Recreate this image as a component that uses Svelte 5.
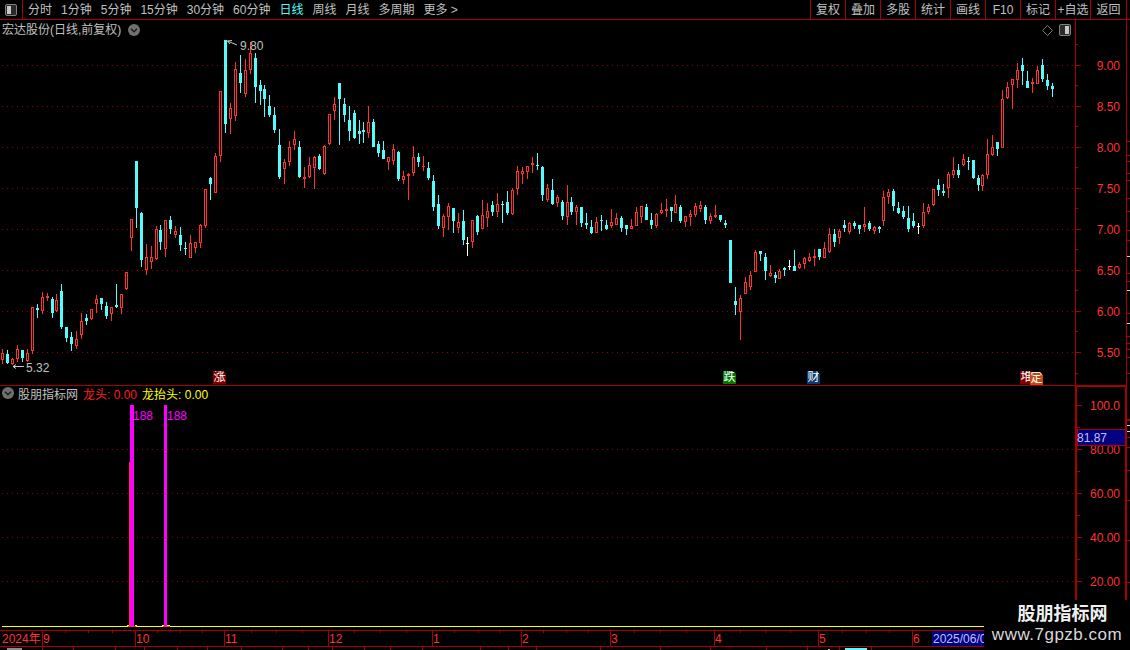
<script>
  const left = ['分时', '1分钟', '5分钟', '15分钟', '30分钟', '60分钟', '日线', '周线', '月线', '多周期', '更多 >'];
  const right = ['复权', '叠加', '多股', '统计', '画线', 'F10', '标记', '+自选', '返回'];

  const raw = [
    [0,349,353,360,364],[1,350,354,363,364],[0,358,359,364,365],[0,345,349,359,362],[1,350,350,358,362],[0,349,353,361,362],
    [0,307,307,351,354],[1,304,308,310,318],[0,292,297,311,314],[0,293,296,298,301],[1,297,299,313,318],[0,294,300,311,312],
    [1,284,291,327,329],[1,327,327,338,342],[1,332,337,344,351],[0,331,339,346,349],[0,313,321,335,339],[1,314,318,321,325],
    [0,309,309,319,320],[0,295,299,304,313],[1,298,298,304,310],[1,302,306,316,319],[0,307,307,314,321],[1,284,305,307,308],
    [0,294,294,308,314],[0,272,272,289,290],[0,219,219,238,251],[1,161,161,208,228],[1,212,213,260,267],[0,244,257,270,275],
    [0,246,257,262,269],[0,226,229,259,260],[1,225,230,242,250],[0,220,220,249,257],[1,216,220,229,234],[0,226,231,235,238],
    [1,227,235,245,251],[1,242,248,249,255],[0,235,243,258,258],[0,242,242,248,253],[0,224,225,243,248],[0,189,189,226,228],
    [1,177,178,184,200],[0,153,156,193,193],[0,91,91,156,162],[1,40,40,124,133],[0,103,108,119,134],[0,62,69,116,121],
    [1,55,73,83,93],[0,59,70,94,97],[0,42,53,70,74],[1,53,58,87,103],[1,80,85,91,105],[1,85,89,99,117],[1,95,106,115,117],
    [1,107,115,130,133],[1,129,145,177,179],[0,159,162,169,184],[0,141,147,162,166],[0,131,139,145,150],[1,141,147,177,178],
    [0,167,177,179,188],[0,157,165,177,178],[0,156,157,168,189],[1,154,156,169,170],[0,145,146,174,175],[0,114,114,144,145],
    [0,97,104,111,120],[1,83,83,99,145],[1,98,104,115,122],[1,106,120,131,141],[1,110,113,138,139],[1,120,131,134,144],
    [1,122,130,132,143],[0,106,122,133,138],[1,119,122,147,147],[1,141,144,153,157],[1,141,150,159,159],[0,157,157,162,170],
    [0,144,149,161,165],[1,151,152,179,181],[0,171,176,180,184],[0,173,174,176,200],[0,146,157,173,176],[1,153,157,162,167],
    [0,156,166,167,171],[1,162,168,178,180],[1,175,181,207,211],[1,195,204,226,229],[0,214,216,228,237],[0,203,206,217,230],
    [1,208,208,221,233],[0,213,222,228,233],[1,210,221,240,245],[2,237,243,244,256],[0,220,220,242,248],[1,215,216,232,235],
    [0,200,215,229,229],[0,203,211,218,227],[1,201,205,212,216],[0,193,204,212,217],[1,201,204,205,223],[1,191,202,213,215],
    [0,188,190,214,215],[0,166,171,189,195],[0,167,171,174,184],[0,166,166,172,179],[0,157,163,165,173],[1,153,165,166,170],
    [1,166,167,195,201],[0,184,188,200,202],[1,179,190,204,205],[0,195,197,203,207],[1,200,202,216,220],[0,185,202,217,225],
    [1,197,202,212,215],[0,205,207,212,225],[1,207,207,223,227],[1,213,223,225,229],[1,220,227,233,234],[0,217,222,233,233],
    [1,215,220,221,231],[1,220,225,229,230],[0,209,222,226,228],[0,213,218,225,225],[1,216,218,228,232],[1,225,225,229,235],
    [0,219,226,229,229],[0,207,212,226,226],[0,206,206,217,223],[1,204,207,220,220],[1,213,220,225,229],[0,213,214,226,228],
    [0,203,210,213,214],[0,199,209,211,217],[1,207,207,211,222],[0,195,204,213,213],[1,205,207,221,223],[0,216,216,222,227],
    [0,210,214,217,226],[0,203,206,215,217],[0,201,205,209,212],[1,205,207,220,224],[0,213,216,221,224],[0,205,215,217,218],
    [1,215,215,220,222],[1,220,223,225,228],[1,240,240,283,283],[1,287,301,305,315],[0,295,298,312,340],[0,277,282,294,294],
    [0,271,275,287,290],[0,250,252,272,272],[1,251,251,254,261],[1,253,257,271,280],[0,265,273,276,277],[1,272,275,278,283],
    [0,269,271,279,279],[1,267,268,270,276],[2,260,266,267,270],[1,250,266,271,271],[0,262,264,268,269],[0,257,258,264,269],
    [0,253,257,261,262],[0,249,256,258,266],[1,249,249,257,260],[0,242,248,258,258],[0,228,234,252,253],[1,229,234,242,247],
    [0,229,231,238,244],[1,220,225,228,232],[0,222,223,232,234],[1,221,223,226,229],[1,225,225,229,234],[0,207,224,227,232],
    [1,221,223,229,231],[0,226,227,231,234],[1,226,227,229,233],[0,191,197,221,226],[0,189,192,197,204],[1,189,191,206,211],
    [1,202,208,213,214],[1,206,211,217,219],[1,206,218,229,232],[1,213,221,226,228],[2,223,226,227,234],[0,203,212,226,228],
    [0,204,207,212,214],[0,189,189,205,206],[1,179,185,190,196],[1,184,191,193,196],[0,172,174,188,198],[0,157,170,175,178],
    [1,164,170,175,178],[0,154,159,165,166],[1,157,161,162,170],[1,160,160,178,179],[1,175,178,185,191],[0,174,175,186,191],
    [0,139,154,175,179],[0,135,147,155,156],[1,142,142,149,156],[0,90,99,148,148],[0,82,87,98,99],[0,79,79,85,109],
    [0,63,70,80,88],[1,58,65,71,85],[1,71,81,88,88],[0,78,82,84,93],[0,66,70,84,84],[1,59,65,79,82],[1,74,80,86,90],[1,83,86,89,97]
  ];
  const candles = raw.map((c, i) => ({ t: c[0], x: 2 + Math.round(i * 4.952), wt: c[1], bt: c[2], bb: c[3], wb: c[4] }));
  const colors = ['#ff3232', '#54fcfc', '#ffffff'];

  const priceGrid = [[65, '9.00'], [106, '8.50'], [147, '8.00'], [188, '7.50'], [229, '7.00'], [270, '6.50'], [311, '6.00'], [352, '5.50']];
  const volGrid = [[449, '80.00'], [493, '60.00'], [537, '40.00'], [581, '20.00']];
  const farTicks = [[141, 1, 0], [155, 0, 0], [161, 0, 0], [173, 0, 0], [180, 0, 0], [198, 0, 0], [211, 0, 0], [230, 0, 0], [240, 0, 0], [256, 0, 1], [273, 0, 0], [281, 0, 0], [290, 0, 1], [313, 0, 0], [323, 0, 1], [336, 1, 0], [343, 0, 0], [349, 0, 0], [357, 0, 0], [373, 0, 0]];
  const lowerFar = [[420, 1, 0], [419, 0, 0], [425, 0, 1], [431, 0, 1], [437, 1, 0], [447, 0, 0], [470, 0, 0], [500, 0, 0], [540, 0, 0], [582, 0, 0]];

  const months = [[42, '9'], [135, '10'], [224, '11'], [328, '12'], [432, '1'], [521, '2'], [610, '3'], [714, '4'], [818, '5'], [912, '6']];
  const minor = [65, 88, 112, 157, 180, 202, 251, 276, 302, 354, 380, 406, 454, 478, 499, 543, 566, 588, 634, 660, 686, 740, 765, 790, 842, 866, 889];
  const lowSeps = [42, 73, 115, 144, 177, 207, 241, 282, 308, 332, 364, 390, 422, 480, 508, 536, 600, 660, 710, 766, 807, 839, 871];
  const badges = [
    { t: '涨', c: 'b-red', x: 213 }, { t: '跌', c: 'b-green', x: 723 }, { t: '财', c: 'b-blue', x: 807 },
    { t: '堆', c: 'b-red', x: 1020 }, { t: '定', c: 'b-orange', x: 1030 }
  ];
</script>

<div class="app">
  <header class="topbar">
    <div class="corner"><span class="toggle on-left"></span></div>
    <nav class="periods">
      {#each left as item}
        <span class:active={item === '日线'}>{item}</span>
      {/each}
    </nav>
    <nav class="tools">
      {#each right as item}
        <span>{item}</span>
      {/each}
    </nav>
  </header>

  <section class="panel upper">
    <svg width="1130" height="366" viewBox="0 20 1130 366" class="chart">
      {#each priceGrid as g}
        <line class="grid" x1="2" x2="1075" y1={g[0] + 0.5} y2={g[0] + 0.5} />
        <rect class="axis" x="1075" y={g[0]} width="6" height="1" />
        <rect class="axis" x="1075" y={g[0] - 21} width="3" height="1" />
        <text class="axis-label" x="1120" y={g[0] + 5} text-anchor="end">{g[1]}</text>
      {/each}
      <rect class="axis" x="1075" y="373" width="3" height="1" />
      <rect class="axis" x="1075" y="20" width="1" height="365" />
      <rect class="axis" x="1126" y="20" width="1" height="365" />
      <rect class="axis" x="0" y="385" width="1127" height="1" />
      {#each farTicks as t}
        <rect fill={t[2] ? '#d0d0d0' : '#a80000'} x={t[1] ? 1126 : 1127} y={t[0]} width={t[1] ? 4 : 3} height="1" />
      {/each}

      {#each candles as c}
        <rect fill={colors[c.t]} x={c.x} y={c.wt} width="1" height={c.wb - c.wt} />
        {#if c.t === 0 && c.bb - c.bt > 2}
          <rect class="hollow" x={c.x - 0.5} y={c.bt + 0.5} width="2" height={c.bb - c.bt - 1} />
        {:else}
          <rect fill={colors[c.t]} x={c.x - 1} y={c.bt} width="3" height={Math.max(c.bb - c.bt, 1)} />
        {/if}
      {/each}

      <path class="flag" d="M237 45 L227.5 41 M227.5 41 L232 40.5 M227.5 41 L230 44" />
      <text class="note" x="240" y="50">9.80</text>
      <path class="flag" d="M24 366.5 H13 M13 366.5 L16 364.5 M13 366.5 L16 368.5" />
      <text class="note" x="26" y="372">5.32</text>
    </svg>

    <div class="title">
      <span>宏达股份(日线,前复权)</span>
      <svg class="chev" width="12" height="12" viewBox="0 0 12 12"><circle cx="6" cy="6" r="6" fill="#707070" /><path d="M3 4.8 L6 7.8 L9 4.8" fill="none" stroke="#1c1c1c" stroke-width="1.4" /></svg>
    </div>
    <div class="window-tools">
      <svg width="11" height="11" viewBox="0 0 11 11"><path d="M5.5 .5 L10.5 5.5 L5.5 10.5 L.5 5.5 Z" fill="none" stroke="#7a7a7a" /></svg>
      <span class="toggle on-right"></span>
    </div>
    {#each badges as b}
      <span class="badge {b.c}" style="left:{b.x}px">{b.t}</span>
    {/each}
  </section>

  <section class="panel lower">
    <svg width="1130" height="244" viewBox="0 386 1130 244" class="chart">
      {#each volGrid as g}
        <line class="grid" x1="2" x2="1075" y1={g[0] + 0.5} y2={g[0] + 0.5} />
        <rect class="axis" x="1077" y={g[0]} width="5" height="1" />
        <rect class="axis" x="1077" y={g[0] - 22} width="3" height="1" />
        <text class="axis-label" x="1120" y={g[0] + 5} text-anchor="end">{g[1]}</text>
      {/each}
      <rect class="axis" x="1077" y="405" width="5" height="1" />
      <text class="axis-label" x="1120" y="410" text-anchor="end">100.0</text>
      <rect class="axis" x="1077" y="603" width="3" height="1" />
      <rect class="axis" x="1075" y="386" width="2" height="214" />
      <rect class="axis" x="1125" y="386" width="2" height="214" />
      <rect class="axis" x="1075" y="386" width="52" height="1" />
      {#each lowerFar as t}
        <rect fill={t[2] ? '#d0d0d0' : '#a80000'} x={t[1] ? 1126 : 1127} y={t[0]} width={t[1] ? 4 : 3} height="1" />
      {/each}

      <rect class="last-box" x="1077.5" y="429.5" width="48" height="16" />
      <text class="last-text" x="1077" y="442">81.87</text>

      <rect x="2" y="626" width="982" height="1" fill="#ffff00" />
      <path d="M127 625.5 H129 M135 625.5 H137 M162 625.5 H164 M167 625.5 H170" stroke="#ffff00" fill="none" />
      <rect x="129" y="462" width="1" height="164" fill="#ff3232" />
      <rect x="130" y="405" width="4" height="221" fill="#ff00ff" />
      <rect x="164" y="405" width="3" height="221" fill="#ff00ff" />
      <rect x="128" y="626" width="8" height="1" fill="#ff3232" />
      <rect x="163" y="626" width="7" height="1" fill="#ff3232" />
      <text class="pink" x="133" y="420">188</text>
      <text class="pink" x="167" y="420">188</text>
    </svg>
    <div class="legend">
      <svg class="chev" width="12" height="12" viewBox="0 0 12 12"><circle cx="6" cy="6" r="6" fill="#707070" /><path d="M3 4.8 L6 7.8 L9 4.8" fill="none" stroke="#1c1c1c" stroke-width="1.4" /></svg>
      <span class="name">股朋指标网</span>
      <span class="red">龙头: 0.00</span>
      <span class="yellow">龙抬头: 0.00</span>
    </div>
  </section>

  <footer class="xaxis">
    <svg width="1130" height="20" viewBox="0 630 1130 20" class="chart">
      <rect class="axis" x="0" y="630" width="1130" height="1" />
      <rect class="axis" x="0" y="646" width="1130" height="1" />
      <text class="axis-label" x="2" y="643">2024年</text>
      {#each months as m}
        <rect class="axis" x={m[0]} y="631" width="1" height="15" />
        <text class="axis-label" x={m[0] + 1} y="643">{m[1]}</text>
      {/each}
      {#each minor as x}
        <rect class="axis" {x} y="631" width="1" height="2" />
      {/each}
      {#each lowSeps as x}
        <rect class="axis" {x} y="647" width="1" height="3" />
      {/each}
      <rect x="7" y="648" width="15" height="2" fill="#8c8c8c" />
      <rect x="828" y="649" width="2" height="1" fill="#c0c0c0" />
      <rect x="845" y="648" width="22" height="2" fill="#54fcfc" />
      <rect x="932" y="631" width="54" height="15" fill="#000080" />
      <text class="date" x="933" y="643">2025/06/0</text>
    </svg>
  </footer>

  <aside class="watermark">
    <strong>股朋指标网</strong>
    <span>www.7gpzb.com</span>
  </aside>
</div>

<style>
  :global(body) { margin: 0; background: #000; }
  .app {
    position: relative;
    width: 1130px;
    height: 650px;
    overflow: hidden;
    background: #000;
    color: #c0c0c0;
    font: 12px "Liberation Sans", "Noto Sans CJK SC", sans-serif;
  }
  .topbar {
    display: flex;
    height: 19px;
    padding-right: 3px;
    border-bottom: 1px solid #a80000;
    line-height: 20px;
  }
  .corner {
    display: flex;
    align-items: center;
    justify-content: center;
    width: 22px;
    border-right: 1px solid #a80000;
  }
  .toggle {
    position: relative;
    display: block;
    box-sizing: border-box;
    width: 12px;
    height: 12px;
    border: 1px solid #808080;
    border-radius: 2px;
    background: #2a2a2a;
  }
  .toggle::after {
    content: "";
    position: absolute;
    top: 1px;
    bottom: 1px;
    width: 4px;
    background: #c8c8c8;
  }
  .on-left::after { left: 1px; }
  .on-right::after { right: 1px; }
  .periods {
    display: flex;
    gap: 9px;
    padding-left: 5px;
  }
  .periods .active { color: #54fcfc; }
  .tools {
    display: flex;
    margin-left: auto;
    border-right: 1px solid #a80000;
  }
  .tools span {
    box-sizing: border-box;
    width: 35px;
    border-left: 1px solid #a80000;
    text-align: center;
    white-space: nowrap;
  }
  .tools span:last-child { width: 36px; }

  .panel { position: relative; }
  .chart { display: block; }
  .chart rect, .chart line { shape-rendering: crispEdges; }
  .axis { fill: #a80000; }
  .grid {
    stroke: #960000;
    stroke-width: 1;
    stroke-dasharray: 1 4;
  }
  .hollow {
    fill: #000;
    stroke: #ff3232;
    stroke-width: 1;
  }
  .axis-label {
    fill: #ff3232;
    font-size: 12px;
  }
  .note {
    fill: #c0c0c0;
    font-size: 12px;
  }
  .flag {
    fill: none;
    stroke: #c8c8c8;
    stroke-width: 1;
  }
  .last-box {
    fill: #000080;
    stroke: #a80000;
    stroke-width: 1;
  }
  .last-text, .date {
    fill: #c0c0ff;
    font-size: 12px;
  }
  .pink {
    fill: #ff00ff;
    font-size: 12px;
  }

  .title {
    position: absolute;
    top: 1px;
    left: 2px;
    display: flex;
    align-items: center;
    gap: 7px;
    line-height: 18px;
  }
  .chev { display: block; flex: none; }
  .window-tools {
    position: absolute;
    top: 4px;
    left: 1042px;
    display: flex;
    align-items: center;
    gap: 6px;
  }
  .badge {
    position: absolute;
    top: 351px;
    box-sizing: border-box;
    width: 13px;
    height: 13px;
    color: #fff;
    font-size: 12px;
    line-height: 13px;
    text-align: center;
    clip-path: polygon(0 0, 10px 0, 13px 3px, 13px 13px, 0 13px);
  }
  .b-red { background: #800000; }
  .b-green { background: #007a00; }
  .b-blue { background: #0a3a70; }
  .b-orange { top: 352px; background: #c04a10; }

  .legend {
    position: absolute;
    top: -1px;
    left: 2px;
    display: flex;
    align-items: center;
    height: 16px;
  }
  .name { margin-left: 4px; }
  .red { margin-left: 5px; color: #ff1c1c; }
  .yellow { margin-left: 5px; color: #ffff00; }

  .xaxis { height: 20px; }
  .watermark {
    position: absolute;
    right: 0;
    bottom: 0;
    display: flex;
    flex-direction: column;
    align-items: center;
    box-sizing: border-box;
    width: 146px;
    height: 50px;
    padding-top: 3px;
    background: #000;
    color: #f0f0f0;
  }
  .watermark strong {
    padding-left: 11px;
    font-size: 18px;
    line-height: 23px;
  }
  .watermark span {
    color: #d8d8d8;
    font-size: 17px;
    line-height: 18px;
    letter-spacing: 0.5px;
    white-space: nowrap;
  }
</style>
